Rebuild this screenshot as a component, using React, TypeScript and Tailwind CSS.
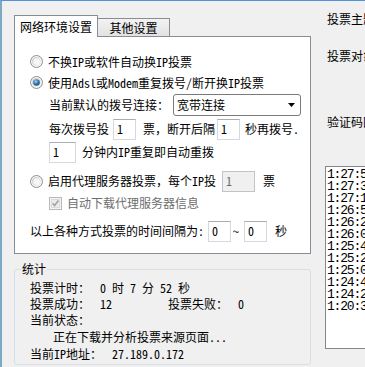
import React from "react";

const Radio = ({ checked }: { checked?: boolean }) => (
  <svg width="13" height="13" viewBox="0 0 13 13" className="shrink-0">
    <defs>
      <linearGradient id="ring" x1="0" y1="0" x2="1" y2="1">
        <stop offset="0" stopColor="#c4c4c4" />
        <stop offset="1" stopColor="#fbfbfb" />
      </linearGradient>
      <radialGradient id="dot" cx="0.4" cy="0.35" r="0.75">
        <stop offset="0" stopColor="#a9dbf8" />
        <stop offset="0.45" stopColor="#3b7db6" />
        <stop offset="1" stopColor="#133f6a" />
      </radialGradient>
    </defs>
    <circle cx="6.5" cy="6.5" r="6" fill="#f4f4f4" stroke="#8e8f8f" />
    <circle cx="6.5" cy="6.5" r="4.5" fill="url(#ring)" />
    <circle cx="6.5" cy="6.5" r="3.2" fill="#f6f6f6" />
    {checked && <circle cx="6.5" cy="6.5" r="3.3" fill="url(#dot)" />}
  </svg>
);

const CheckDisabled = () => (
  <svg width="13" height="13" viewBox="0 0 13 13" className="shrink-0">
    <rect x="0.5" y="0.5" width="12" height="12" fill="#f4f4f4" stroke="#b9b9b9" />
    <rect x="2.5" y="2.5" width="8" height="8" fill="#ececec" stroke="#dcdcdc" />
    <path d="M3.6 6.4l2 2.1 3.8-5" stroke="#a3a3a3" strokeWidth="1.6" fill="none" />
  </svg>
);

const Box = ({
  value,
  w,
  disabled,
}: {
  value: string;
  w: string;
  disabled?: boolean;
}) => (
  <div
    className={`${w} h-[21px] shrink-0 flex items-center pl-[3px] border ${
      disabled
        ? "bg-[#f0f0f0] border-[#c0c4c8] text-[#6d6d6d]"
        : "bg-white border-[#d5d8dd] border-t-[#abadb3]"
    }`}>
    {value}
  </div>
);

const times = [
  "1:27:52",
  "1:27:31",
  "1:27:10",
  "1:26:50",
  "1:26:29",
  "1:26:08",
  "1:25:47",
  "1:25:26",
  "1:25:05",
  "1:24:44",
  "1:24:23",
  "1:20:31",
];

export default function App() {
  return (
    <div className="w-[365px] h-[367px] overflow-hidden flex bg-[#f0f0f0] border-t border-t-[#4f93d8] border-l-2 border-l-[#7aaac6] text-[12px] leading-[14px] text-black whitespace-nowrap font-[family-name:'Noto_Sans_Mono_CJK_SC','Noto_Sans_CJK_SC',sans-serif]">
      {/* left column */}
      <div className="ml-[12px] w-[297px] shrink-0 pt-[14px] flex flex-col">
        <div className="relative z-10 flex items-end h-[21px]">
          <div className="h-[22px] -mb-px w-[84px] bg-white border border-b-0 border-[#898c95] flex items-center justify-center">
            网络环境设置
          </div>
          <div className="h-[18px] w-[72px] border border-l-0 border-b-0 border-[#898c95] bg-gradient-to-b from-[#f3f3f3] to-[#e2e2e2] flex items-center justify-center pt-[1px]">
            其他设置
          </div>
        </div>

        <div className="h-[218px] bg-white border border-[#898c95] flex flex-col">
          <div className="mt-[14px] h-[21px] flex items-center pl-[15px]">
            <Radio />
            <span className="ml-[5px]">不换IP或软件自动换IP投票</span>
          </div>
          <div className="h-[21px] flex items-center pl-[15px]">
            <Radio checked />
            <span className="ml-[5px]">使用Adsl或Modem重复拨号/断开换IP投票</span>
          </div>
          <div className="mt-[1px] h-[22px] flex items-center pl-[34px]">
            <span>当前默认的拨号连接：</span>
            <div className="ml-[4px] w-[128px] h-[22px] border border-[#7a7a7a] rounded-[3px] bg-white flex items-center justify-between pl-[3px] pr-[5px]">
              <span>宽带连接</span>
              <svg width="7" height="4" viewBox="0 0 7 4">
                <path d="M0 0h7L3.5 4z" fill="#000" />
              </svg>
            </div>
          </div>
          <div className="mt-[2px] h-[22px] flex items-center pl-[34px]">
            <span>每次拨号投</span>
            <div className="ml-[4px]">
              <Box value="1" w="w-[23px]" />
            </div>
            <span className="ml-[7px]">票，断开后隔</span>
            <div className="ml-[2px]">
              <Box value="1" w="w-[23px]" />
            </div>
            <span className="ml-[5px]">秒再拨号.</span>
          </div>
          <div className="mt-[1px] h-[22px] flex items-center pl-[34px]">
            <Box value="1" w="w-[27px]" />
            <span className="ml-[6px]">分钟内IP重复即自动重拨</span>
          </div>
          <div className="mt-[7px] h-[22px] flex items-center pl-[15px]">
            <Radio />
            <span className="ml-[5px]">启用代理服务器投票，每个IP投</span>
            <div className="ml-[6px]">
              <Box value="1" w="w-[33px]" disabled />
            </div>
            <span className="ml-[8px]">票</span>
          </div>
          <div className="mt-[1px] h-[20px] flex items-center pl-[34px]">
            <CheckDisabled />
            <span className="ml-[5px] text-[#6d6d6d]">自动下载代理服务器信息</span>
          </div>
          <div className="mt-[7px] h-[22px] flex items-center pl-[15px]">
            <span>以上各种方式投票的时间间隔为:</span>
            <div className="ml-[4px]">
              <Box value="0" w="w-[23px]" />
            </div>
            <span className="ml-[2px]">~</span>
            <div className="ml-[5px]">
              <Box value="0" w="w-[23px]" />
            </div>
            <span className="ml-[8px]">秒</span>
          </div>
        </div>

        <fieldset className="mt-[8px] border border-[#d5dfe5] rounded-[3px] pb-[2px]">
          <legend className="ml-[6px] px-[1px] leading-[14px]">统计</legend>
          <div className="pl-[15px] pt-[4px] flex flex-col">
            <div className="h-[16px] flex items-center">
              <span className="w-[70px]">投票计时：</span>
              <span className="whitespace-pre">0 时 7 分 52 秒</span>
            </div>
            <div className="h-[16px] flex items-center">
              <span className="w-[70px]">投票成功：</span>
              <span className="w-[68px]">12</span>
              <span className="w-[70px]">投票失败：</span>
              <span>0</span>
            </div>
            <div className="h-[16px] flex items-center">当前状态：</div>
            <div className="h-[17px] flex items-center pl-[23px]">
              正在下载并分析投票来源页面...
            </div>
            <div className="h-[17px] flex items-center">
              <span className="w-[82px]">当前IP地址：</span>
              <span>27.189.0.172</span>
            </div>
          </div>
        </fieldset>
      </div>

      {/* right column */}
      <div className="ml-[14px] w-[200px] shrink-0 flex flex-col">
        <div className="mt-[11px] pl-[2px] h-[14px]">投票主题：</div>
        <div className="mt-[23px] pl-[2px] h-[14px]">投票对象：</div>
        <div className="mt-[52px] pl-[2px] h-[14px]">验证码图片：</div>
        <div className="mt-[37px] h-[183px] border border-[#828790] bg-white pt-[2px] pl-[1px] flex flex-col font-['Liberation_Mono',monospace] text-[13px] tracking-[-1.2px]">
          {times.map((t) => (
            <div key={t} className="h-[12px] leading-[12px]">
              {t}
            </div>
          ))}
        </div>
      </div>
    </div>
  );
}
